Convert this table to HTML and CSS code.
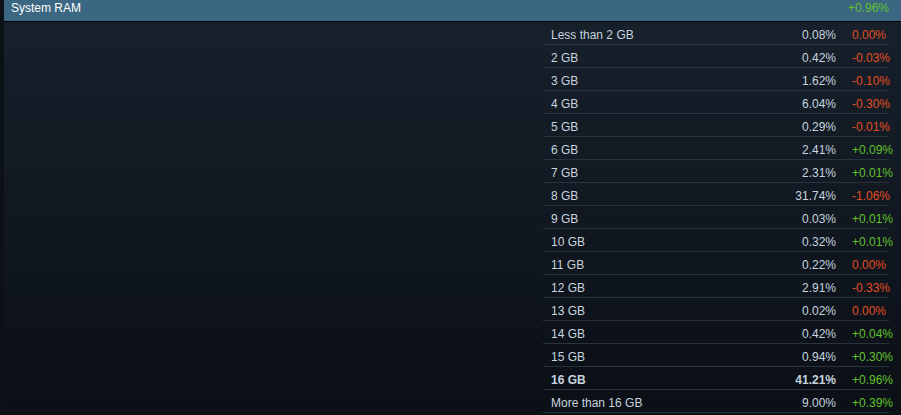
FILE: index.html
```html
<!DOCTYPE html>
<html>
<head>
<meta charset="utf-8">
<link rel="stylesheet" href="styles.css">
</head>
<body>
<div class="page">
  <div class="panel">
    <div class="header">
      <span class="title">System RAM</span>
      <span class="header-change pos">+0.96%</span>
    </div>
    <div class="content">
      <div class="chart"></div>
      <div class="table">
        <div class="row"><span class="label">Less than 2 GB</span><span class="pct">0.08%</span><span class="chg neg">0.00%</span></div>
        <div class="row"><span class="label">2 GB</span><span class="pct">0.42%</span><span class="chg neg">-0.03%</span></div>
        <div class="row"><span class="label">3 GB</span><span class="pct">1.62%</span><span class="chg neg">-0.10%</span></div>
        <div class="row"><span class="label">4 GB</span><span class="pct">6.04%</span><span class="chg neg">-0.30%</span></div>
        <div class="row"><span class="label">5 GB</span><span class="pct">0.29%</span><span class="chg neg">-0.01%</span></div>
        <div class="row"><span class="label">6 GB</span><span class="pct">2.41%</span><span class="chg pos">+0.09%</span></div>
        <div class="row"><span class="label">7 GB</span><span class="pct">2.31%</span><span class="chg pos">+0.01%</span></div>
        <div class="row"><span class="label">8 GB</span><span class="pct">31.74%</span><span class="chg neg">-1.06%</span></div>
        <div class="row"><span class="label">9 GB</span><span class="pct">0.03%</span><span class="chg pos">+0.01%</span></div>
        <div class="row"><span class="label">10 GB</span><span class="pct">0.32%</span><span class="chg pos">+0.01%</span></div>
        <div class="row"><span class="label">11 GB</span><span class="pct">0.22%</span><span class="chg neg">0.00%</span></div>
        <div class="row"><span class="label">12 GB</span><span class="pct">2.91%</span><span class="chg neg">-0.33%</span></div>
        <div class="row"><span class="label">13 GB</span><span class="pct">0.02%</span><span class="chg neg">0.00%</span></div>
        <div class="row"><span class="label">14 GB</span><span class="pct">0.42%</span><span class="chg pos">+0.04%</span></div>
        <div class="row"><span class="label">15 GB</span><span class="pct">0.94%</span><span class="chg pos">+0.30%</span></div>
        <div class="row bold"><span class="label">16 GB</span><span class="pct">41.21%</span><span class="chg pos">+0.96%</span></div>
        <div class="row"><span class="label">More than 16 GB</span><span class="pct">9.00%</span><span class="chg pos">+0.39%</span></div>
      </div>
    </div>
  </div>
</div>
</body>
</html>
```

FILE: styles.css
```css
html, body {
  margin: 0;
  padding: 0;
}
body {
  background: #0c1117;
  font-family: Arial, "Liberation Sans", sans-serif;
  font-size: 12px;
  color: #c6d4df;
  height: 415px;
  overflow: hidden;
}
.page {
  padding-left: 4px;
  height: 415px;
}
.panel {
  height: 100%;
  display: flex;
  flex-direction: column;
  background: linear-gradient(to bottom, #17212c 0%, #0b0f16 100%);
}
.header {
  display: flex;
  justify-content: space-between;
  align-items: flex-start;
  background: #3b6782;
  border-bottom: 1px solid #000;
  padding: 1px 12px 6px 7px;
  line-height: 14px;
  color: #ffffff;
}
.content {
  display: flex;
}
.chart {
  flex: 1;
}
.table {
  width: 346px;
  margin-right: 12px;
}
.row {
  display: flex;
  height: 18px;
  line-height: 18px;
  padding-top: 4px;
  border-bottom: 1px solid #29333e;
  white-space: nowrap;
}
.label {
  flex: 1;
  padding-left: 8px;
}
.pct {
  text-align: right;
}
.chg {
  width: 37px;
  margin-left: 16px;
  overflow: visible;
}
.bold {
  font-weight: bold;
}
.bold .chg {
  font-weight: normal;
}
.pos {
  color: #62c12a;
}
.neg {
  color: #e24e22;
}
```
